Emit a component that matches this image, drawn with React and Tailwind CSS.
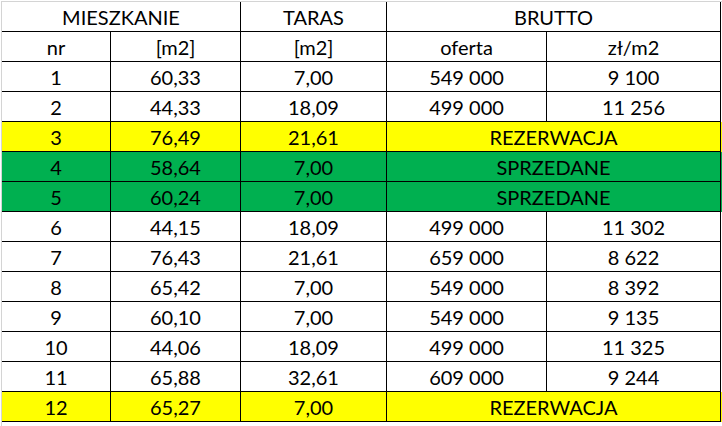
import React from 'react';

const cols = 'grid grid-cols-[109px_130px_146px_160px_174px]';
const cell = 'h-[30px] border-r border-b border-black text-center pt-[2px] leading-[27px]';

const rows = [
  ['1', '60,33', '7,00', '549 000', '9 100'],
  ['2', '44,33', '18,09', '499 000', '11 256'],
  ['3', '76,49', '21,61', 'REZERWACJA', 'yellow'],
  ['4', '58,64', '7,00', 'SPRZEDANE', 'green'],
  ['5', '60,24', '7,00', 'SPRZEDANE', 'green'],
  ['6', '44,15', '18,09', '499 000', '11 302'],
  ['7', '76,43', '21,61', '659 000', '8 622'],
  ['8', '65,42', '7,00', '549 000', '8 392'],
  ['9', '60,10', '7,00', '549 000', '9 135'],
  ['10', '44,06', '18,09', '499 000', '11 325'],
  ['11', '65,88', '32,61', '609 000', '9 244'],
  ['12', '65,27', '7,00', 'REZERWACJA', 'yellow'],
];

export default function App() {
  return (
    <div className="w-[722px] h-[426px] bg-white pl-px pt-px overflow-hidden text-[20px] text-black" style={{ fontFamily: 'Lato, "Open Sans", sans-serif' }}>
      <div className="h-full border-l border-t border-[#d4d4d4]">
        {/* header */}
        <div className={cols}>
          <div className={`${cell} col-span-2`}>MIESZKANIE</div>
          <div className={cell}>TARAS</div>
          <div className={`${cell} col-span-2`}>BRUTTO</div>
        </div>
        <div className={cols}>
          <div className={cell}>nr</div>
          <div className={cell}>[m2]</div>
          <div className={cell}>[m2]</div>
          <div className={cell}>oferta</div>
          <div className={cell}>zł/m2</div>
        </div>

        {rows.map((r) => {
          const status = r[4] === 'yellow' || r[4] === 'green';
          const bg = r[4] === 'yellow' ? 'bg-[#ffff00]' : r[4] === 'green' ? 'bg-[#00b050]' : '';
          return (
            <div key={r[0]} className={`${cols} ${bg}`}>
              <div className={cell}>{r[0]}</div>
              <div className={cell}>{r[1]}</div>
              <div className={cell}>{r[2]}</div>
              {status ? (
                <div className={`${cell} col-span-2`}>{r[3]}</div>
              ) : (
                <>
                  <div className={cell}>{r[3]}</div>
                  <div className={cell}>{r[4]}</div>
                </>
              )}
            </div>
          );
        })}
      </div>
    </div>
  );
}
